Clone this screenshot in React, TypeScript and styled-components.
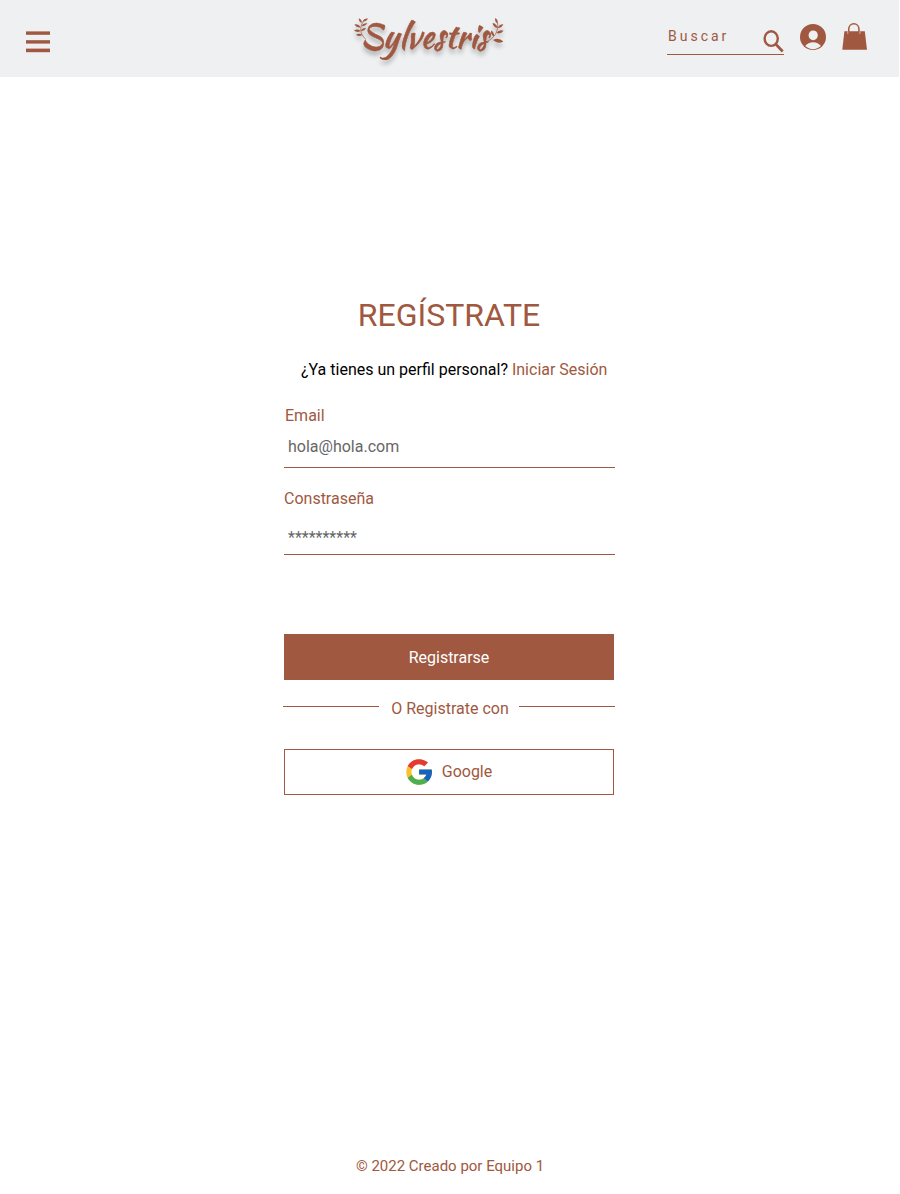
import React from "react";
import styled, { createGlobalStyle } from "styled-components";

const BROWN = "#a05840";

const GlobalStyle = createGlobalStyle`
  *, *::before, *::after { box-sizing: border-box; }
  body {
    margin: 0;
    background: #fff;
    font-family: Roboto, "Liberation Sans", sans-serif;
    font-size: 16px;
    line-height: 19px;
  }
`;

const Page = styled.div`
  display: flex;
  flex-direction: column;
  width: 899px;
  height: 1194px;
  color: ${BROWN};
`;

const Header = styled.header`
  display: grid;
  grid-template-columns: 346px 166px 1fr;
  height: 77px;
  background: #eef0f2;
`;

const MenuButton = styled.button`
  display: block;
  width: 24px;
  margin: 31px 0 0 26px;
  padding: 0;
  border: 0;
  background: none;
  align-self: start;
`;

const MenuIcon = styled.svg`
  display: block;
`;

const LogoDrawing = styled.svg`
  display: block;
  filter: drop-shadow(0 4px 2px rgba(0, 0, 0, 0.25));
`;

const LogoText = styled.text`
  font-family: "Kaushan Script", "Liberation Serif", serif;
  font-weight: 400;
  fill: ${BROWN};
  stroke: ${BROWN};
  stroke-width: 0.5px;
`;

const Tools = styled.div`
  display: flex;
  align-items: flex-start;
  padding-left: 155px;
`;

const Search = styled.label`
  display: flex;
  justify-content: space-between;
  width: 117px;
  height: 55px;
  padding: 28px 0 0 1px;
  border-bottom: 1px solid ${BROWN};
  font-size: 14px;
  line-height: 17px;
  letter-spacing: 3px;
`;

const SearchIcon = styled.svg`
  flex: none;
  margin-top: 1px;
`;

const UserIcon = styled.svg`
  margin: 24px 0 0 16px;
`;

const BagIcon = styled.svg`
  margin: 22px 0 0 16px;
`;

const Form = styled.main`
  display: flex;
  flex-direction: column;
  width: 331px;
  margin: 219px 0 0 284px;
`;

const Title = styled.h1`
  margin: 0 1px 0 0;
  font-size: 32px;
  font-weight: 400;
  line-height: 38px;
  text-align: center;
`;

const Prompt = styled.p`
  margin: 26px 0 27px 17px;
  color: #000;
  white-space: nowrap;
`;

const Link = styled.a`
  color: ${BROWN};
`;

const Label = styled.label<{ $indent?: number }>`
  padding-left: ${(p) => p.$indent ?? 0}px;
`;

const Field = styled.div<{ $top: number; $bottom: number }>`
  padding: ${(p) => p.$top}px 4px ${(p) => p.$bottom}px;
  border-bottom: 1px solid ${BROWN};
  color: #666;
`;

const Gap = styled.div<{ $size: number }>`
  height: ${(p) => p.$size}px;
`;

const Button = styled.button<{ $outlined?: boolean }>`
  display: flex;
  align-items: center;
  justify-content: center;
  gap: 10px;
  width: 330px;
  height: 46px;
  padding: 0;
  border: 1px solid ${BROWN};
  background: ${(p) => (p.$outlined ? "#fff" : BROWN)};
  color: ${(p) => (p.$outlined ? BROWN : "#fff")};
  font: inherit;
`;

const ButtonText = styled.span`
  padding-bottom: 2px;
`;

const Divider = styled.div`
  display: flex;
  justify-content: space-between;
  margin: 19px 0 31px -1px;
`;

const Rule = styled.span`
  width: 96px;
  height: 1px;
  margin-top: 7px;
  background: ${BROWN};
`;

const DividerText = styled.span`
  padding-left: 2px;
`;

const Footer = styled.footer`
  margin: auto 0 19px 1px;
  font-size: 15px;
  line-height: 18px;
  text-align: center;
`;

type LeafShape = [baseX: number, baseY: number, tipX: number, tipY: number];

const leaves: LeafShape[] = [
  [361.8, 23, 358.8, 18.3],
  [362.5, 21.5, 368, 18.5],
  [360.6, 27.5, 354.5, 24.3],
  [361.3, 26, 367.3, 23.3],
  [360.6, 31, 354, 30.6],
  [360.8, 31, 366, 28],
  [362.3, 35, 356, 34.8],
  [497.6, 23.5, 495.2, 18],
  [497.8, 28, 503.3, 24.3],
  [497.4, 28, 492.6, 23],
  [496.3, 33, 503.6, 30.8],
  [494, 36.5, 491, 30.5],
  [493, 40, 503.4, 41.5],
];

const Leaf = ({ shape: [bx, by, tx, ty] }: { shape: LeafShape }) => {
  const mx = (bx + tx) / 2;
  const my = (by + ty) / 2;
  const nx = (ty - by) * 0.36;
  const ny = (bx - tx) * 0.36;
  return <path d={`M${bx} ${by}Q${mx + nx} ${my + ny} ${tx} ${ty}Q${mx - nx} ${my - ny} ${bx} ${by}Z`} fill={BROWN} />;
};

const Logo = () => (
  <LogoDrawing width="166" height="77" viewBox="346 0 166 77" role="img" aria-label="Sylvestris">
    <path d="M365.500 39C360 34 359 27 364 20.500M484 43C494 39 499 32 497.500 22.500" fill="none" stroke={BROWN} strokeWidth="0.7" />
    {leaves.map((shape) => (
      <Leaf key={shape.join()} shape={shape} />
    ))}
    <LogoText x="360.500" y="47.500" fontSize="32.500" textLength="127.500" lengthAdjust="spacingAndGlyphs">
      Sylvestris
    </LogoText>
  </LogoDrawing>
);

const GoogleLogo = () => (
  <svg width="26" height="26" viewBox="3.6 4 40.4 40">
    <path fill="#fbc02d" d="M43.6 20.1H42V20H24v8h11.3C33.7 32.7 29.2 36 24 36c-6.6 0-12-5.4-12-12s5.4-12 12-12c3.1 0 5.8 1.2 8 3l5.7-5.6C34 6.1 29.3 4 24 4 13 4 4 13 4 24s9 20 20 20 20-9 20-20c0-1.3-.1-2.7-.4-3.9z" />
    <path fill="#e53935" d="m6.3 14.7 6.6 4.8C14.7 15.1 19 12 24 12c3.1 0 5.8 1.2 8 3l5.7-5.6C34 6.1 29.3 4 24 4 16.3 4 9.7 8.3 6.3 14.7z" />
    <path fill="#4caf50" d="M24 44c5.2 0 9.9-2 13.4-5.2l-6.2-5.2C29.2 35.1 26.7 36 24 36c-5.2 0-9.6-3.3-11.3-7.9l-6.5 5C9.5 39.6 16.2 44 24 44z" />
    <path fill="#1565c0" d="M43.6 20.1 42 20H24v8h11.3c-.8 2.2-2.2 4.2-4.1 5.6l6.2 5.2C37 39.2 44 34 44 24c0-1.3-.1-2.7-.4-3.9z" />
  </svg>
);

export default function App() {
  return (
    <Page>
      <GlobalStyle />
      <Header>
        <MenuButton aria-label="Menú">
          <MenuIcon width="24" height="22" viewBox="0 0 24 22" fill={BROWN}>
            <rect y="0.4" width="24" height="3.4" />
            <rect y="9.2" width="24" height="3.4" />
            <rect y="17.6" width="24" height="3.6" />
          </MenuIcon>
        </MenuButton>
        <Logo />
        <Tools>
          <Search>
            Buscar
            <SearchIcon width="22" height="24" viewBox="0 0 22 24" fill="none" stroke={BROWN}>
              <ellipse cx="9.2" cy="9.6" rx="6.6" ry="7.3" strokeWidth="2.4" />
              <path d="M13.4 14.8L20.7 22.5" strokeWidth="2.7" />
            </SearchIcon>
          </Search>
          <UserIcon width="26" height="26" viewBox="0 0 26 26">
            <circle cx="13" cy="13" r="13" fill={BROWN} />
            <ellipse cx="13.2" cy="11.3" rx="4.6" ry="4.9" fill="#eef0f2" />
            <path d="M5.2 22.1C8.5 16.8 17.8 16.8 20.9 22.1C16.5 26.2 9.5 26.2 5.2 22.1Z" fill="#eef0f2" />
          </UserIcon>
          <BagIcon width="25" height="28" viewBox="0 0 25 28">
            <path d="M2.4 9.2H22.8L25 27.7H0.3Z" fill={BROWN} />
            <path d="M6.7 12V7.5C6.7 -0.2 17 -0.2 17 7.5V12" fill="none" stroke={BROWN} strokeWidth="1.5" />
            <path d="M5.8 9.3V12M17.9 9.3V12" stroke="#eef0f2" strokeWidth="0.6" />
          </BagIcon>
        </Tools>
      </Header>

      <Form>
        <Title>REGÍSTRATE</Title>
        <Prompt>
          ¿Ya tienes un perfil personal? <Link>Iniciar Sesión</Link>
        </Prompt>
        <Label $indent={1}>Email</Label>
        <Field $top={12} $bottom={11}>hola@hola.com</Field>
        <Gap $size={21} />
        <Label>Constraseña</Label>
        <Field $top={20} $bottom={7}>**********</Field>
        <Gap $size={79} />
        <Button>Registrarse</Button>
        <Divider>
          <Rule />
          <DividerText>O Registrate con</DividerText>
          <Rule />
        </Divider>
        <Button $outlined>
          <GoogleLogo />
          <ButtonText>Google</ButtonText>
        </Button>
      </Form>

      <Footer>© 2022 Creado por Equipo 1</Footer>
    </Page>
  );
}
